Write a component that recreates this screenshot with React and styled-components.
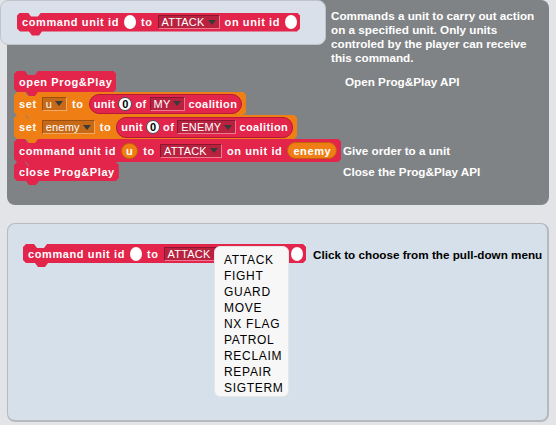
import React from 'react';
import styled, { createGlobalStyle } from 'styled-components';

const RED = '#e3244b';
const RED_EDGE = '#b51838';
const ORANGE = '#ef7f14';
const ORANGE_EDGE = '#c2600c';

const GlobalStyle = createGlobalStyle`
  html, body {
    margin: 0;
    padding: 0;
    background: #e3e4e7;
  }
  body {
    font-family: "Liberation Sans", Arial, sans-serif;
  }
`;

const Page = styled.div`
  width: 556px;
  height: 425px;
  overflow: hidden;
  display: flex;
  flex-direction: column;
`;

const HelpPanel = styled.section`
  margin: 0 7px;
  height: 205px;
  flex-shrink: 0;
  box-sizing: border-box;
  background: #808385;
  border-radius: 8px;
  display: flex;
  flex-direction: column;
`;

const Intro = styled.div`
  display: flex;
  align-items: flex-start;
`;

const BlockCard = styled.div`
  margin-left: -7px;
  width: 326px;
  height: 45px;
  flex-shrink: 0;
  box-sizing: border-box;
  padding: 11px 0 0 16px;
  background: #d9e0e9;
  border: 1px solid #bfc4ca;
  border-radius: 8px;
`;

const Description = styled.p`
  margin: 9px 0 0 5px;
  color: #fff;
  font-size: 11.7px;
  font-weight: bold;
  line-height: 14px;
  white-space: nowrap;
`;

const Stack = styled.div`
  margin-top: 6px;
  padding-left: 7px;
  display: flex;
  flex-direction: column;
`;

const StackRow = styled.div`
  display: grid;
  grid-template-columns: 329px 1fr;
  align-items: center;
  & + & {
    margin-top: -4px;
  }
`;

const Label = styled.span`
  color: ${p => p.$dark ? '#000' : '#fff'};
  font-size: 11.7px;
  font-weight: bold;
  white-space: nowrap;
  padding-bottom: 4px;
  padding-left: ${p => p.$indent || 0}px;
`;

const Block = styled.div`
  justify-self: start;
  display: inline-flex;
  align-items: center;
  gap: 5px;
  box-sizing: border-box;
  height: ${p => p.$h + 4}px;
  padding: 0 ${p => p.$pr ?? 4}px 4px 5px;
  background: ${p => p.$color};
  color: #fff;
  font-size: 11px;
  font-weight: bold;
  letter-spacing: 0.6px;
  white-space: nowrap;
  clip-path: polygon(
    0 3px, 3px 0, 11px 0, 14px 4px, 21px 4px, 24px 0,
    calc(100% - 3px) 0, 100% 3px,
    100% calc(100% - 7px), calc(100% - 3px) calc(100% - 4px),
    25px calc(100% - 4px), 22px 100%, 15px 100%, 12px calc(100% - 4px),
    3px calc(100% - 4px), 0 calc(100% - 7px)
  );
`;

const Slot = styled.span`
  width: 12px;
  height: 14px;
  border-radius: 6px / 7px;
  background: #fff;
  flex-shrink: 0;
`;

const NumSlot = styled.span`
  width: 14px;
  height: 14px;
  box-sizing: border-box;
  border-radius: 50%;
  border: 1px solid #4a4a4a;
  background: #fff;
  color: #000;
  display: inline-flex;
  align-items: center;
  justify-content: center;
  font-size: 11px;
  letter-spacing: 0;
`;

const Dropdown = styled.span`
  display: inline-flex;
  align-items: center;
  gap: 3px;
  height: 14px;
  box-sizing: border-box;
  padding: 0 3px 0 3px;
  background: ${p => p.$orange ? '#c76a18' : '#b8223f'};
  border: 1px solid ${p => p.$orange ? '#f3a862' : '#ec7a90'};
  border-top-color: ${p => p.$orange ? '#9a4f0c' : '#8a1730'};
  border-left-color: ${p => p.$orange ? '#9a4f0c' : '#8a1730'};
  color: #fff;
  font-weight: normal;
  letter-spacing: 0.2px;
  &::after {
    content: '';
    border-left: 4px solid transparent;
    border-right: 4px solid transparent;
    border-top: 5px solid #3a3a3a;
  }
`;

const Reporter = styled.span`
  display: inline-flex;
  align-items: center;
  gap: 3px;
  height: ${p => p.$h || 19}px;
  box-sizing: border-box;
  padding: 0 ${p => p.$px || 3}px;
  border-radius: 10px;
  background: ${p => p.$orange ? ORANGE : RED};
  border: 1px solid ${p => p.$orange ? ORANGE_EDGE : RED_EDGE};
  color: #fff;
  letter-spacing: ${p => p.$orange ? 0.6 : 0.4}px;
`;

const ChoicePanel = styled.section`
  position: relative;
  margin: 18px 7px 0;
  height: 199px;
  box-sizing: border-box;
  padding: 20px 0 0 15px;
  background: #d6e0ea;
  border: 1px solid #b6babe;
  border-right-width: 2px;
  border-bottom-width: 2px;
  border-radius: 8px;
  display: flex;
  align-items: flex-start;
  gap: 7px;
`;

const Hint = styled(Label)`
  margin-top: 4px;
  line-height: 14px;
  padding: 0;
`;

const PullDown = styled.ul`
  position: absolute;
  left: 206px;
  top: 22px;
  width: 75px;
  height: 151px;
  box-sizing: border-box;
  margin: 0;
  padding: 5px 0 0 9px;
  list-style: none;
  background: #f7f7f7;
  border: 1px solid #e4e6e8;
  border-radius: 6px;
`;

const PullDownItem = styled.li`
  height: 16px;
  line-height: 16px;
  font-size: 12px;
  letter-spacing: 0.7px;
  color: #000;
`;

const ACTIONS = ['ATTACK', 'FIGHT', 'GUARD', 'MOVE', 'NX FLAG', 'PATROL', 'RECLAIM', 'REPAIR', 'SIGTERM'];

const CommandBlock = () => (
  <Block $color={RED} $h={19} $pr={3}>
    command unit id
    <Slot />
    to
    <Dropdown>ATTACK</Dropdown>
    on unit id
    <Slot />
  </Block>
);

const SetBlock = ({ name, team, h }) => (
  <Block $color={ORANGE} $h={h}>
    set
    <Dropdown $orange>{name}</Dropdown>
    to
    <Reporter $h={h - 3} $px={4}>
      unit
      <NumSlot>0</NumSlot>
      of
      <Dropdown>{team}</Dropdown>
      coalition
    </Reporter>
  </Block>
);

export default function App() {
  return (
    <Page>
      <GlobalStyle />
      <HelpPanel>
        <Intro>
          <BlockCard>
            <CommandBlock />
          </BlockCard>
          <Description>
            Commands a unit to carry out action<br />
            on a specified unit. Only units<br />
            controled by the player can receive<br />
            this command.
          </Description>
        </Intro>
        <Stack>
          <StackRow>
            <Block $color={RED} $h={21}>open Prog&amp;Play</Block>
            <Label $indent={2}>Open Prog&amp;Play API</Label>
          </StackRow>
          <StackRow>
            <SetBlock name="u" team="MY" h={23} />
          </StackRow>
          <StackRow>
            <SetBlock name="enemy" team="ENEMY" h={24} />
          </StackRow>
          <StackRow>
            <Block $color={RED} $h={23}>
              command unit id
              <Reporter $orange $h={16} $px={4}>u</Reporter>
              to
              <Dropdown>ATTACK</Dropdown>
              on unit id
              <Reporter $orange $h={17} $px={5}>enemy</Reporter>
            </Block>
            <Label>Give order to a unit</Label>
          </StackRow>
          <StackRow>
            <Block $color={RED} $h={19}>close Prog&amp;Play</Block>
            <Label>Close the Prog&amp;Play API</Label>
          </StackRow>
        </Stack>
      </HelpPanel>
      <ChoicePanel>
        <CommandBlock />
        <Hint $dark>Click to choose from the pull-down menu</Hint>
        <PullDown>
          {ACTIONS.map(a => (
            <PullDownItem key={a}>{a}</PullDownItem>
          ))}
        </PullDown>
      </ChoicePanel>
    </Page>
  );
}
